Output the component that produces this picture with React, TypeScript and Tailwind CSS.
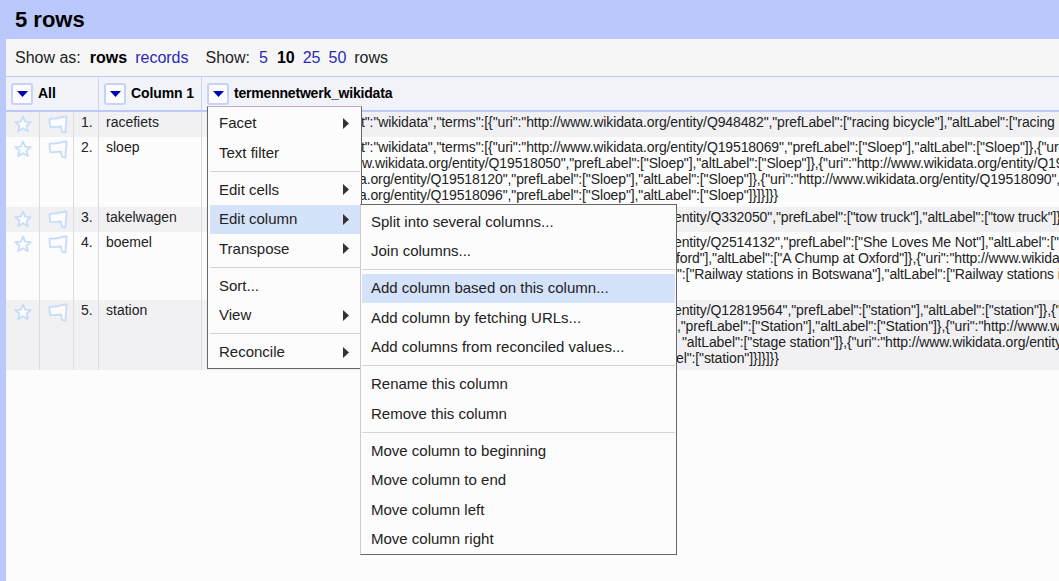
const sans = "font-['Liberation_Sans',Arial,sans-serif]";

function Arrow() {
  return (
    <svg width="11" height="6" viewBox="0 0 11 6" className="block">
      <path d="M0 0h11L5.5 6z" fill="#0000bb" />
    </svg>
  );
}

function DropButton() {
  return (
    <span className="flex h-[22px] w-[22px] shrink-0 items-center justify-center rounded-[3px] border-2 border-[#c5d2fb] bg-[#fcfcfc]">
      <Arrow />
    </span>
  );
}

function Star() {
  return (
    <svg width="18" height="18" viewBox="0 0 18 18" className="block">
      <path
        d="M9 1.5l2.2 5.2 5.6.4-4.3 3.6 1.4 5.5L9 13.2l-4.9 3 1.4-5.5-4.3-3.6 5.6-.4z"
        fill="#fcfcfc"
        stroke="#c6dcf8"
        strokeWidth="1.8"
        strokeLinejoin="round"
      />
    </svg>
  );
}

function Flag() {
  return (
    <svg width="21" height="20" viewBox="0 0 21 20" className="block">
      <path
        d="M2.500 4C4.500 3 6 3.800 8 3.500c4-.5 8-2 11.500-2 .3 3.500-.2 6.500-.7 9.500l-.3 6.500-3.500-.7-1.200-5.300c-3.500 0-7 .8-10.500.5-.6-2.500-.8-5.500-.8-8z"
        fill="#fcfcfc"
        stroke="#c6dcf8"
        strokeWidth="1.8"
        strokeLinejoin="round"
      />
    </svg>
  );
}

type Line = { ml: string; text: string };
type Row = { n: number; name: string; h: string; shaded: boolean; lines: Line[] };

const rows: Row[] = [
  {
    n: 1,
    name: 'racefiets',
    h: 'h-[25px]',
    shaded: true,
    lines: [
      {
        ml: 'ml-[159px]',
        text: 't":"wikidata","terms":[{"uri":"http://www.wikidata.org/entity/Q948482","prefLabel":["racing bicycle"],"altLabel":["racing bicycle"]}]}',
      },
    ],
  },
  {
    n: 2,
    name: 'sloep',
    h: 'h-[70px]',
    shaded: false,
    lines: [
      {
        ml: 'ml-[159px]',
        text: 't":"wikidata","terms":[{"uri":"http://www.wikidata.org/entity/Q19518069","prefLabel":["Sloep"],"altLabel":["Sloep"]},{"uri":"http://www',
      },
      {
        ml: 'ml-[160px]',
        text: 'w.wikidata.org/entity/Q19518050","prefLabel":["Sloep"],"altLabel":["Sloep"]},{"uri":"http://www.wikidata.org/entity/Q19518120',
      },
      {
        ml: 'ml-[157px]',
        text: 'a.org/entity/Q19518120","prefLabel":["Sloep"],"altLabel":["Sloep"]},{"uri":"http://www.wikidata.org/entity/Q19518090","pref',
      },
      {
        ml: 'ml-[157px]',
        text: 'a.org/entity/Q19518096","prefLabel":["Sloep"],"altLabel":["Sloep"]}]}]}}',
      },
    ],
  },
  {
    n: 3,
    name: 'takelwagen',
    h: 'h-[25px]',
    shaded: true,
    lines: [
      {
        ml: 'ml-[472px]',
        text: 'entity/Q332050","prefLabel":["tow truck"],"altLabel":["tow truck"]}]}',
      },
    ],
  },
  {
    n: 4,
    name: 'boemel',
    h: 'h-[68px]',
    shaded: false,
    lines: [
      {
        ml: 'ml-[472px]',
        text: 'entity/Q2514132","prefLabel":["She Loves Me Not"],"altLabel":["She Loves',
      },
      {
        ml: 'ml-[474px]',
        text: 'ford"],"altLabel":["A Chump at Oxford"]},{"uri":"http://www.wikidata.org',
      },
      {
        ml: 'ml-[475px]',
        text: '":["Railway stations in Botswana"],"altLabel":["Railway stations in',
      },
    ],
  },
  {
    n: 5,
    name: 'station',
    h: 'h-[70px]',
    shaded: true,
    lines: [
      {
        ml: 'ml-[472px]',
        text: 'entity/Q12819564","prefLabel":["station"],"altLabel":["station"]},{"uri"',
      },
      {
        ml: 'ml-[475px]',
        text: ',"prefLabel":["Station"],"altLabel":["Station"]},{"uri":"http://www.wikidata',
      },
      {
        ml: 'ml-[480px]',
        text: '"altLabel":["stage station"]},{"uri":"http://www.wikidata.org/entity/Q12',
      },
      {
        ml: 'ml-[474px]',
        text: 'el":["station"]}]}]}}',
      },
    ],
  },
];

function MenuItem({ label, sub, active }: { label: string; sub?: boolean; active?: boolean }) {
  return (
    <div className={`flex h-[29.5px] items-center justify-between pl-[9px] pr-[11px] text-[15px] text-[#222] ${active ? 'bg-[#d5e3fa]' : ''}`}>
      <span>{label}</span>
      {sub && (
        <svg width="6" height="11" viewBox="0 0 6 11" className="block">
          <path d="M0 0l6 5.5L0 11z" fill="#333" />
        </svg>
      )}
    </div>
  );
}

function Sep() {
  return <div className="mb-[3.5px] mt-[3px] h-[1px] bg-[#d4d4d4]" />;
}

function ColumnMenu() {
  return (
    <div className="absolute left-[207px] top-[106px] z-10 w-[155px] border border-[#666] border-t-[#c8a8c8] bg-[#fcfcfc] pb-[1px] pl-[2px] pr-[1px] pt-[1.5px]">
      <MenuItem label="Facet" sub />
      <MenuItem label="Text filter" />
      <Sep />
      <MenuItem label="Edit cells" sub />
      <MenuItem label="Edit column" sub active />
      <MenuItem label="Transpose" sub />
      <Sep />
      <MenuItem label="Sort..." />
      <MenuItem label="View" sub />
      <Sep />
      <MenuItem label="Reconcile" sub />
    </div>
  );
}

function EditColumnMenu() {
  return (
    <div className="absolute left-[360px] top-[204px] z-20 w-[317px] border border-[#666] border-l-[#ccc] bg-[#fcfcfc] pl-[1px] pr-[1px] pt-[2px]">
      <MenuItem label="Split into several columns..." />
      <MenuItem label="Join columns..." />
      <Sep />
      <MenuItem label="Add column based on this column..." active />
      <MenuItem label="Add column by fetching URLs..." />
      <MenuItem label="Add columns from reconciled values..." />
      <Sep />
      <MenuItem label="Rename this column" />
      <MenuItem label="Remove this column" />
      <Sep />
      <MenuItem label="Move column to beginning" />
      <MenuItem label="Move column to end" />
      <MenuItem label="Move column left" />
      <MenuItem label="Move column right" />
    </div>
  );
}

export default function App() {
  return (
    <div className={`relative flex h-[581px] w-[1059px] flex-col overflow-hidden bg-[#fcfcfc] ${sans} text-[14px] text-[#222]`}>
      <header className="flex h-[39px] shrink-0 items-center bg-[#bac8fb] pl-[15px] text-[22px] font-bold text-black">
        5 rows
      </header>
      <div className="flex min-h-0 flex-1">
        <div className="w-[6px] shrink-0 bg-[#bac8fb]" />
        <main className="min-w-0 flex-1">
          <div className="flex h-[37px] items-center whitespace-pre bg-[#f6f6f6] pl-[9px] text-[16px] text-[#222]">
            <span>Show as:</span>
            <b className="ml-[9px] text-black">rows</b>
            <span className="ml-[8px] text-[#2a2ab8]">records</span>
            <span className="ml-[17px]">Show:</span>
            <span className="ml-[9px] text-[#2a2ab8]">5</span>
            <b className="ml-[9px] text-black">10</b>
            <span className="ml-[8px] text-[#2a2ab8]">25</span>
            <span className="ml-[8px] text-[#2a2ab8]">50</span>
            <span className="ml-[8px]">rows</span>
          </div>
          <div className="flex h-[36px] border-b-2 border-t border-[#bac8fb] bg-[#f2f3f8] text-[14px] font-bold text-black">
            <div className="flex w-[93px] items-center gap-[5px] border-r border-[#c9d4f5] pl-[5px]">
              <DropButton />
              All
            </div>
            <div className="flex w-[103px] items-center gap-[5px] border-r border-[#c9d4f5] pl-[5px] tracking-[-0.1px]">
              <DropButton />
              Column 1
            </div>
            <div className="flex flex-1 items-center gap-[5px] pl-[5px] tracking-[-0.2px]">
              <DropButton />
              termennetwerk_wikidata
            </div>
          </div>
          {rows.map((r) => (
            <div key={r.n} className={`flex ${r.h} ${r.shaded ? 'bg-[#f1f1f3]' : 'bg-[#fcfcfc]'} text-[14px] leading-[16px]`}>
              <div className="flex w-[34px] justify-center border-r border-[#dcdce4] pl-[1px] pt-[3px]">
                <Star />
              </div>
              <div className="w-[34px] border-r border-[#dcdce4] pl-[7px] pt-[3px]">
                <Flag />
              </div>
              <div className="w-[25px] border-r border-[#dcdce4] pl-[7px] pt-[2px]">{r.n}.</div>
              <div className="w-[103px] border-r border-[#dcdce4] pl-[7px] pt-[2px]">{r.name}</div>
              <div className="min-w-0 flex-1 overflow-hidden pt-[2px] tracking-[-0.12px] whitespace-nowrap">
                {r.lines.map((l) => (
                  <div key={l.text} className={l.ml}>
                    {l.text}
                  </div>
                ))}
              </div>
            </div>
          ))}
        </main>
      </div>
      <ColumnMenu />
      <EditColumnMenu />
    </div>
  );
}
